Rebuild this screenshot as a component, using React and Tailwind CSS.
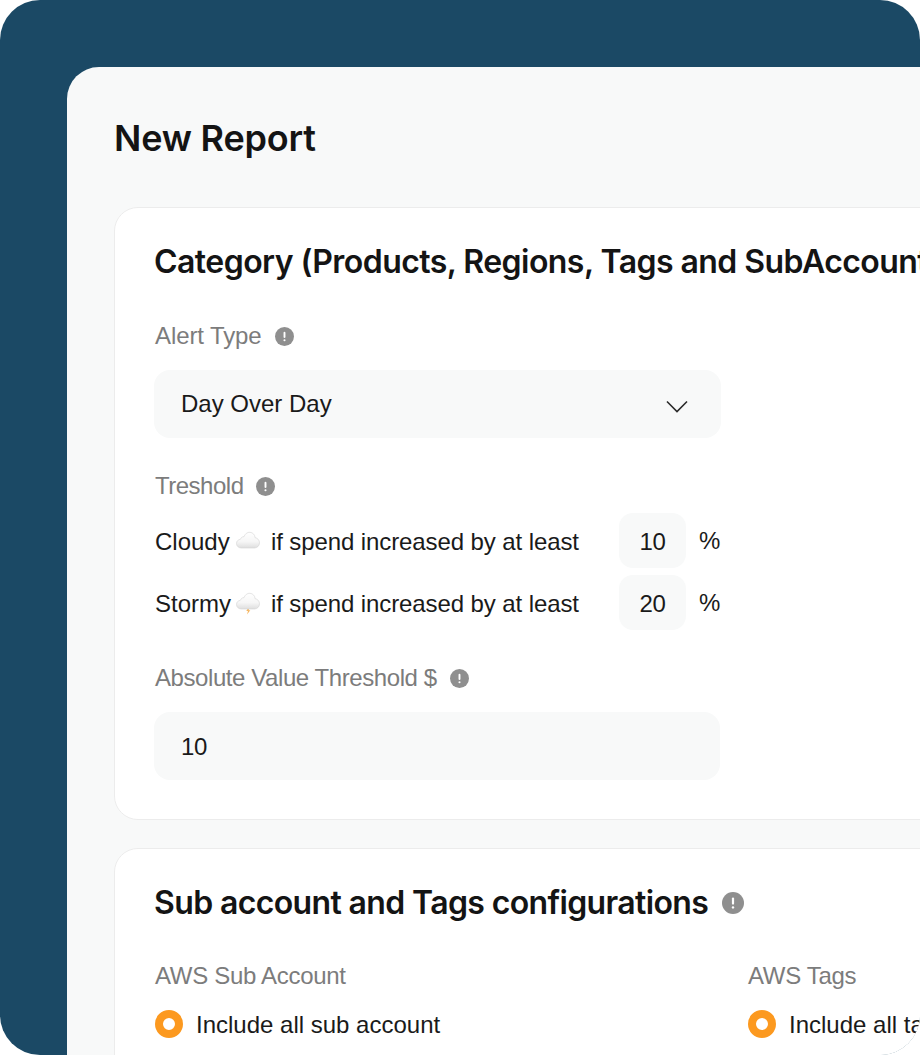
import React from 'react';

const BODY_FONT = { fontFamily: '"Liberation Sans", Arial, sans-serif' };
const HEAD_FONT = { fontFamily: 'Inter, "Liberation Sans", sans-serif' };

function InfoIcon({ className }) {
  return (
    <svg viewBox="0 0 20 20" className={className}>
      <circle cx="10" cy="10" r="10" fill="#8f8f8f" />
      <rect x="9" y="5" width="2" height="6.5" rx="1" fill="#fff" />
      <circle cx="10" cy="14" r="1.1" fill="#fff" />
    </svg>
  );
}

function Cloud({ storm }) {
  const id = storm ? 'cloudB' : 'cloudA';
  return (
    <svg viewBox="0 0 24 24" className={`w-6 h-6 shrink-0 ${storm ? '' : 'mt-[2px]'}`}>
      <defs>
        <linearGradient id={id} x1="0" y1="0" x2="0" y2="1">
          <stop offset="0" stopColor="#ffffff" />
          <stop offset="0.6" stopColor="#f6f6f6" />
          <stop offset="1" stopColor="#dedede" />
        </linearGradient>
      </defs>
      {storm && <path d="M12.500 16.500l-2.200 3.500h1.700l-1 3.500 3.300-4.300h-1.800l1.300-2.700z" fill="#f5b45c" />}
      <path
        d="M5.500 18C2.500 18 .5 16 .5 13.500c0-2.300 1.700-4 3.900-4.200C5 7.500 6.500 6.500 8 6.700 9 3.800 11.500 2 14 2.300c3 .3 5 2.600 5 5.300 2.700.5 4.500 2.600 4.500 5.200 0 3-2.300 5.200-5.200 5.200z"
        fill={`url(#${id})`}
        stroke="#d4d4d4"
        strokeWidth="0.6"
      />
    </svg>
  );
}

function Label({ children, className = 'tracking-[-0.3px]' }) {
  return <span className={`ml-px text-[24px] leading-[30px] text-[#7c7c7c] ${className}`}>{children}</span>;
}

function ThresholdRow({ name, storm, value, className }) {
  return (
    <div className={`flex items-center ml-px text-[24px] text-[#1a1a1a] ${className}`}>
      <span className="w-[81px] pt-[2px]">{name}</span>
      <Cloud storm={storm} />
      <span className="ml-[11px] w-[348px] pt-[2px] whitespace-nowrap tracking-[-0.1px]">if spend increased by at least</span>
      <div className="w-[67px] h-[55px] rounded-[14px] bg-[#f8f9f9] flex items-center justify-center pt-[2px] tracking-[-0.4px]">{value}</div>
      <span className="ml-[13px]">%</span>
    </div>
  );
}

function Radio({ label }) {
  return (
    <div className="flex items-center gap-[13px] mt-[19px] ml-px whitespace-nowrap">
      <span className="w-[28px] h-[28px] mb-[2px] rounded-full border-[8px] border-[#fc991f] bg-white shrink-0" />
      <span className="text-[24px] leading-[30px] text-[#1a1a1a]">{label}</span>
    </div>
  );
}

export default function App() {
  return (
    <div style={BODY_FONT} className="w-[920px] h-[1055px] overflow-hidden rounded-[40px] bg-[#1b4965] pl-[67px] pt-[67px]">
      <div className="w-[853px] h-[988px] rounded-tl-[32px] bg-[#f8f9f9] pl-[47px] overflow-hidden">
        <h1 style={HEAD_FONT} className="pt-[49px] h-[140px] text-[36px] leading-[44px] font-semibold text-[#141414] tracking-[-0.2px]">New Report</h1>

        {/* Category */}
        <section className="w-[900px] h-[613px] rounded-[24px] border border-[#ececec] bg-white pl-[39px] pt-[33px]">
          <h2 style={HEAD_FONT} className="text-[32px] leading-[42px] font-semibold text-[#141414] tracking-[-0.55px] whitespace-nowrap">
            Category (Products, Regions, Tags and SubAccounts)
          </h2>

          <div className="flex items-center gap-[13px] mt-[38px]">
            <Label className="tracking-[-0.1px]">Alert Type</Label>
            <InfoIcon className="w-[19px] h-[19px]" />
          </div>
          <div className="mt-[19px] w-[567px] h-[68px] rounded-[16px] bg-[#f8f9f9] flex items-center justify-between pl-[27px] pr-[33px]">
            <span className="text-[24px] text-[#1a1a1a]">Day Over Day</span>
            <svg viewBox="0 0 22 13" className="w-[22px] h-[13px] mt-1" fill="none" stroke="#2a2a2a" strokeWidth="1.6">
              <path d="M1 1.500l10 10 10-10" />
            </svg>
          </div>

          <div className="flex items-center gap-[13px] mt-[33px]">
            <Label className="tracking-[-0.5px]">Treshold</Label>
            <InfoIcon className="w-[19px] h-[19px]" />
          </div>
          <ThresholdRow name="Cloudy" value="10" className="mt-[12px]" />
          <ThresholdRow name="Stormy" storm value="20" className="mt-[7px]" />

          <div className="flex items-center gap-[13px] mt-[33px]">
            <Label className="tracking-[-0.42px]">Absolute Value Threshold $</Label>
            <InfoIcon className="w-[19px] h-[19px]" />
          </div>
          <div className="mt-[19px] w-[566px] h-[68px] rounded-[16px] bg-[#f8f9f9] flex items-center pl-[27px] pt-[2px] text-[24px] text-[#1a1a1a] tracking-[-0.4px]">10</div>
        </section>

        {/* Sub account and tags */}
        <section className="mt-[28px] w-[900px] h-[300px] rounded-[24px] border border-[#ececec] bg-white pl-[39px] pt-[33px]">
          <div className="flex items-center gap-[14px]">
            <h2 style={HEAD_FONT} className="text-[32px] leading-[42px] font-semibold text-[#141414] tracking-[-0.63px] whitespace-nowrap">
              Sub account and Tags configurations
            </h2>
            <InfoIcon className="w-[22px] h-[22px]" />
          </div>
          <div className="flex mt-[37px]">
            <div className="w-[593px]">
              <Label>AWS Sub Account</Label>
              <Radio label="Include all sub account" />
            </div>
            <div>
              <Label>AWS Tags</Label>
              <Radio label="Include all tags" />
            </div>
          </div>
        </section>
      </div>
    </div>
  );
}
